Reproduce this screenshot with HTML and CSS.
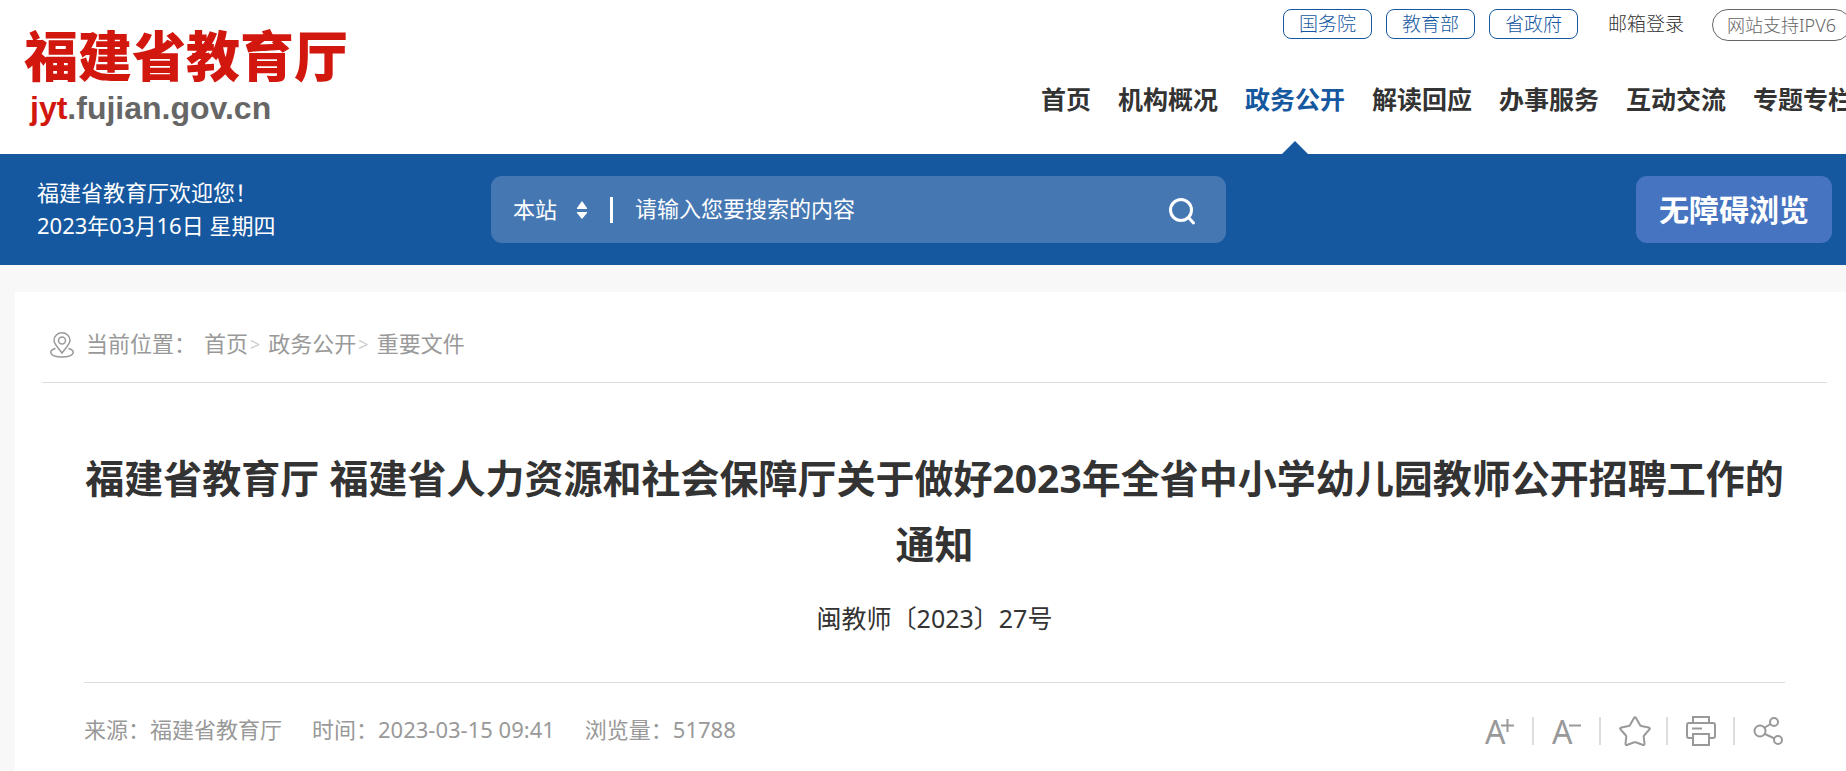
FILE: index.html
```html
<!DOCTYPE html>
<html lang="zh-CN">
<head>
  <meta charset="UTF-8">
  <title>福建省教育厅</title>
  <link rel="stylesheet" href="styles.css">
</head>
<body>
  <header class="header">
    <a class="logo" href="#">
      <span class="logo-name">福建省教育厅</span>
      <span class="logo-url"><b>jyt</b>.fujian.gov.cn</span>
    </a>
    <div class="header-right">
      <div class="top-links">
        <a class="pill" href="#">国务院</a>
        <a class="pill" href="#">教育部</a>
        <a class="pill" href="#">省政府</a>
        <a class="mail" href="#">邮箱登录</a>
        <a class="ipv6" href="#">网站支持IPV6</a>
      </div>
      <nav class="nav">
        <a href="#">首页</a>
        <a href="#">机构概况</a>
        <a class="active" href="#">政务公开</a>
        <a href="#">解读回应</a>
        <a href="#">办事服务</a>
        <a href="#">互动交流</a>
        <a href="#">专题专栏</a>
      </nav>
    </div>
  </header>

  <div class="bar">
    <div class="welcome">
      <p>福建省教育厅欢迎您！</p>
      <p>2023年03月16日 星期四</p>
    </div>
    <form class="search">
      <select class="scope" aria-label="搜索范围">
        <option>本站</option>
      </select>
      <svg class="arrows" width="12" height="20" viewBox="0 0 12 20" fill="#fff">
        <path d="M6 1l5 7q.5 1-.5 1h-9q-1 0-.5-1z"/>
        <path d="M6 19l5-6q.5-1-.5-1h-9q-1 0-.5 1z"/>
      </svg>
      <span class="line"></span>
      <input class="keyword" type="text" aria-label="搜索" placeholder="请输入您要搜索的内容">
      <button class="search-btn" type="button" aria-label="搜索">
        <svg width="28" height="28" viewBox="0 0 28 28" fill="none" stroke="#fff" stroke-width="3" stroke-linecap="round">
          <circle cx="13" cy="13" r="10.5"/>
          <path d="M21 21l4.500 5"/>
        </svg>
      </button>
    </form>
    <button class="access" type="button">无障碍浏览</button>
  </div>

  <main class="main">
    <div class="crumbs">
      <svg class="pin" width="24" height="26" viewBox="0 0 24 26" fill="none" stroke="#999" stroke-width="1.500">
        <path d="M12 21C8 15.500 4 12 4 8.500a8 7.700 0 0 1 16 0C20 12 16 15.500 12 21z"/>
        <circle cx="12" cy="8.500" r="3.500"/>
        <path d="M5.500 16.500C-2 18-1 25 12 25s14-7 6.500-8.500"/>
      </svg>
      <span class="here">当前位置：</span>
      <a href="#">首页</a><i>&gt;</i>
      <a href="#">政务公开</a><i>&gt;</i>
      <a href="#">重要文件</a>
    </div>

    <article class="article">
      <h1>福建省教育厅 福建省人力资源和社会保障厅关于做好2023年全省中小学幼儿园教师公开招聘工作的通知</h1>
      <p class="doc-no">闽教师〔2023〕27号</p>
      <div class="meta">
        <span>来源：福建省教育厅</span>
        <span>时间：2023-03-15 09:41</span>
        <span>浏览量：51788</span>
        <div class="tools">
          <button type="button" aria-label="放大字体">A<svg class="sign" width="13" height="13" viewBox="0 0 13 13"><path d="M0 6.500h13M6.500 0v13"/></svg></button>
          <button type="button" aria-label="缩小字体">A<svg class="sign" width="13" height="13" viewBox="0 0 13 13"><path d="M1 6.500h12"/></svg></button>
          <button type="button" aria-label="收藏">
            <svg width="32" height="30" viewBox="0 0 32 30"><path d="M15 2q1-1.500 2 0l4 7q.5 1 1.500 1l7 1.500q2 .5 1 2l-5 5.500q-1 1-.8 2l.8 6.500q0 2-1.500 1.500l-6.500-2.500q-1.500-.5-3 0L8 29q-1.500.5-1.500-1.500l.8-6.500q.2-1-.8-2l-5-5.500q-1-1.500 1-2L9.500 10q1 0 1.500-1z"/></svg>
          </button>
          <button type="button" aria-label="打印">
            <svg width="30" height="30" viewBox="0 0 30 30"><path d="M7 7V1h16v6M7 22H3q-2 0-2-2V9q0-2 2-2h24q2 0 2 2v11q0 2-2 2h-4M7 18h16v11H7zM6 12.500h10"/></svg>
          </button>
          <button type="button" aria-label="分享">
            <svg width="30" height="30" viewBox="0 0 30 30"><circle cx="7" cy="15" r="5.500"/><circle cx="21" cy="6" r="4"/><circle cx="25" cy="24" r="4"/><path d="M11 12l6.500-4M12 18l9.500 4.500"/></svg>
          </button>
        </div>
      </div>
    </article>
  </main>
</body>
</html>
```
FILE: styles.css
```css
* {
  box-sizing: border-box;
}

body {
  margin: 0;
  font-family: "Noto Sans", "Noto Sans CJK SC", sans-serif;
  font-size: 22px;
  line-height: 33px;
  color: #333;
  background: #f8f8f8;
  overflow-x: hidden;
}

a {
  color: inherit;
  text-decoration: none;
}

p, h1 {
  margin: 0;
}

button, input, select {
  font: inherit;
  color: inherit;
  border: 0;
  padding: 0;
  background: none;
}

button {
  cursor: pointer;
}

/* header */
.header {
  display: flex;
  justify-content: space-between;
  height: 154px;
  background: #fff;
}

.logo {
  padding: 22px 0 0 24px;
}

.logo-name {
  display: block;
  font-family: "Noto Sans CJK SC", sans-serif;
  font-size: 54px;
  font-weight: 900;
  line-height: 64px;
  color: #d2170f;
}

.logo-url {
  display: block;
  padding-left: 6px;
  font-family: "Liberation Sans", sans-serif;
  font-size: 32px;
  font-weight: bold;
  line-height: 44px;
  color: #666;
}

.logo-url b {
  color: #d2170f;
}

.header-right {
  flex: 0 0 805px;
  overflow: hidden;
  white-space: nowrap;
}

.top-links {
  display: flex;
  align-items: flex-start;
  gap: 14px;
  margin: 9px 0 0 242px;
  font-size: 19px;
  font-weight: 300;
  line-height: 28px;
}

.pill {
  flex: none;
  width: 89px;
  border: 1px solid #16589f;
  border-radius: 8px;
  text-align: center;
  color: #16589f;
}

.mail {
  flex: none;
  padding: 1px 14px 0 16px;
}

.ipv6 {
  flex: none;
  padding: 1px 14px;
  border: 1px solid #666;
  border-radius: 16px;
  font-size: 18px;
  color: #666;
}

.nav {
  display: flex;
  gap: 27px;
  margin-top: 31px;
  font-size: 25px;
  font-weight: bold;
  line-height: 54px;
}

.nav a {
  flex: none;
  height: 82px;
}

.nav .active {
  position: relative;
  color: #16589f;
}

.nav .active::after {
  content: "";
  position: absolute;
  left: 50%;
  bottom: 0;
  margin-left: -13px;
  border: 13px solid transparent;
  border-top: 0;
  border-bottom-color: #16589f;
}

/* blue bar */
.bar {
  display: flex;
  align-items: center;
  height: 111px;
  padding: 0 14px 0 37px;
  color: #fff;
  background: #16589f;
}

.welcome {
  flex: 0 0 454px;
  padding-bottom: 2px;
}

.search {
  display: flex;
  align-items: center;
  flex: 0 1 735px;
  height: 67px;
  padding: 0 30px 0 22px;
  border-radius: 11px;
  background: #4578b3;
}

.scope {
  width: 63px;
  appearance: none;
}

.line {
  width: 3px;
  height: 26px;
  margin: 0 22px;
  background: #fff;
}

.keyword {
  flex: 1;
  min-width: 0;
  padding-bottom: 2px;
  outline: none;
}

.keyword::placeholder {
  color: #fff;
  opacity: 1;
}

.search-btn {
  display: flex;
  padding-top: 3px;
}

.access {
  width: 196px;
  height: 67px;
  margin-left: auto;
  border-radius: 11px;
  font-size: 30px;
  font-weight: bold;
  background: #4674c1;
}

/* content */
.main {
  margin: 27px 0 0 15px;
  padding: 0 19px 40px 27px;
  background: #fff;
}

.crumbs {
  display: flex;
  align-items: center;
  height: 91px;
  padding: 12px 0 0 8px;
  border-bottom: 1px solid #ddd;
  color: #999;
}

.pin {
  margin: 4px 12px 0 0;
}

.here {
  margin-right: 8px;
}

.crumbs i {
  margin: 2px 8px 0 2px;
  font-size: 18px;
  font-style: normal;
  color: #ccc;
}

.article {
  padding: 62px 42px 0;
}

h1 {
  font-size: 39px;
  line-height: 66px;
  text-align: center;
}

.doc-no {
  padding: 21px 0 44px;
  font-size: 25px;
  line-height: 40px;
  text-align: center;
}

.meta {
  display: flex;
  align-items: center;
  gap: 30px;
  padding-top: 30px;
  border-top: 1px solid #ddd;
  color: #999;
}

.tools {
  display: flex;
  margin: 3px 2px 0 auto;
}

.tools button {
  display: flex;
  align-items: center;
  width: 67px;
  height: 28px;
  padding-left: 18px;
  border-left: 2px solid #ddd;
  font-size: 32px;
}

.tools button:first-child {
  border-left-color: transparent;
}

.tools button:last-child {
  width: 50px;
}

.tools svg {
  flex: none;
  fill: none;
  stroke: #999;
  stroke-width: 2;
}

.tools .sign {
  align-self: flex-start;
  margin: 2px 0 0 -4px;
}
```
